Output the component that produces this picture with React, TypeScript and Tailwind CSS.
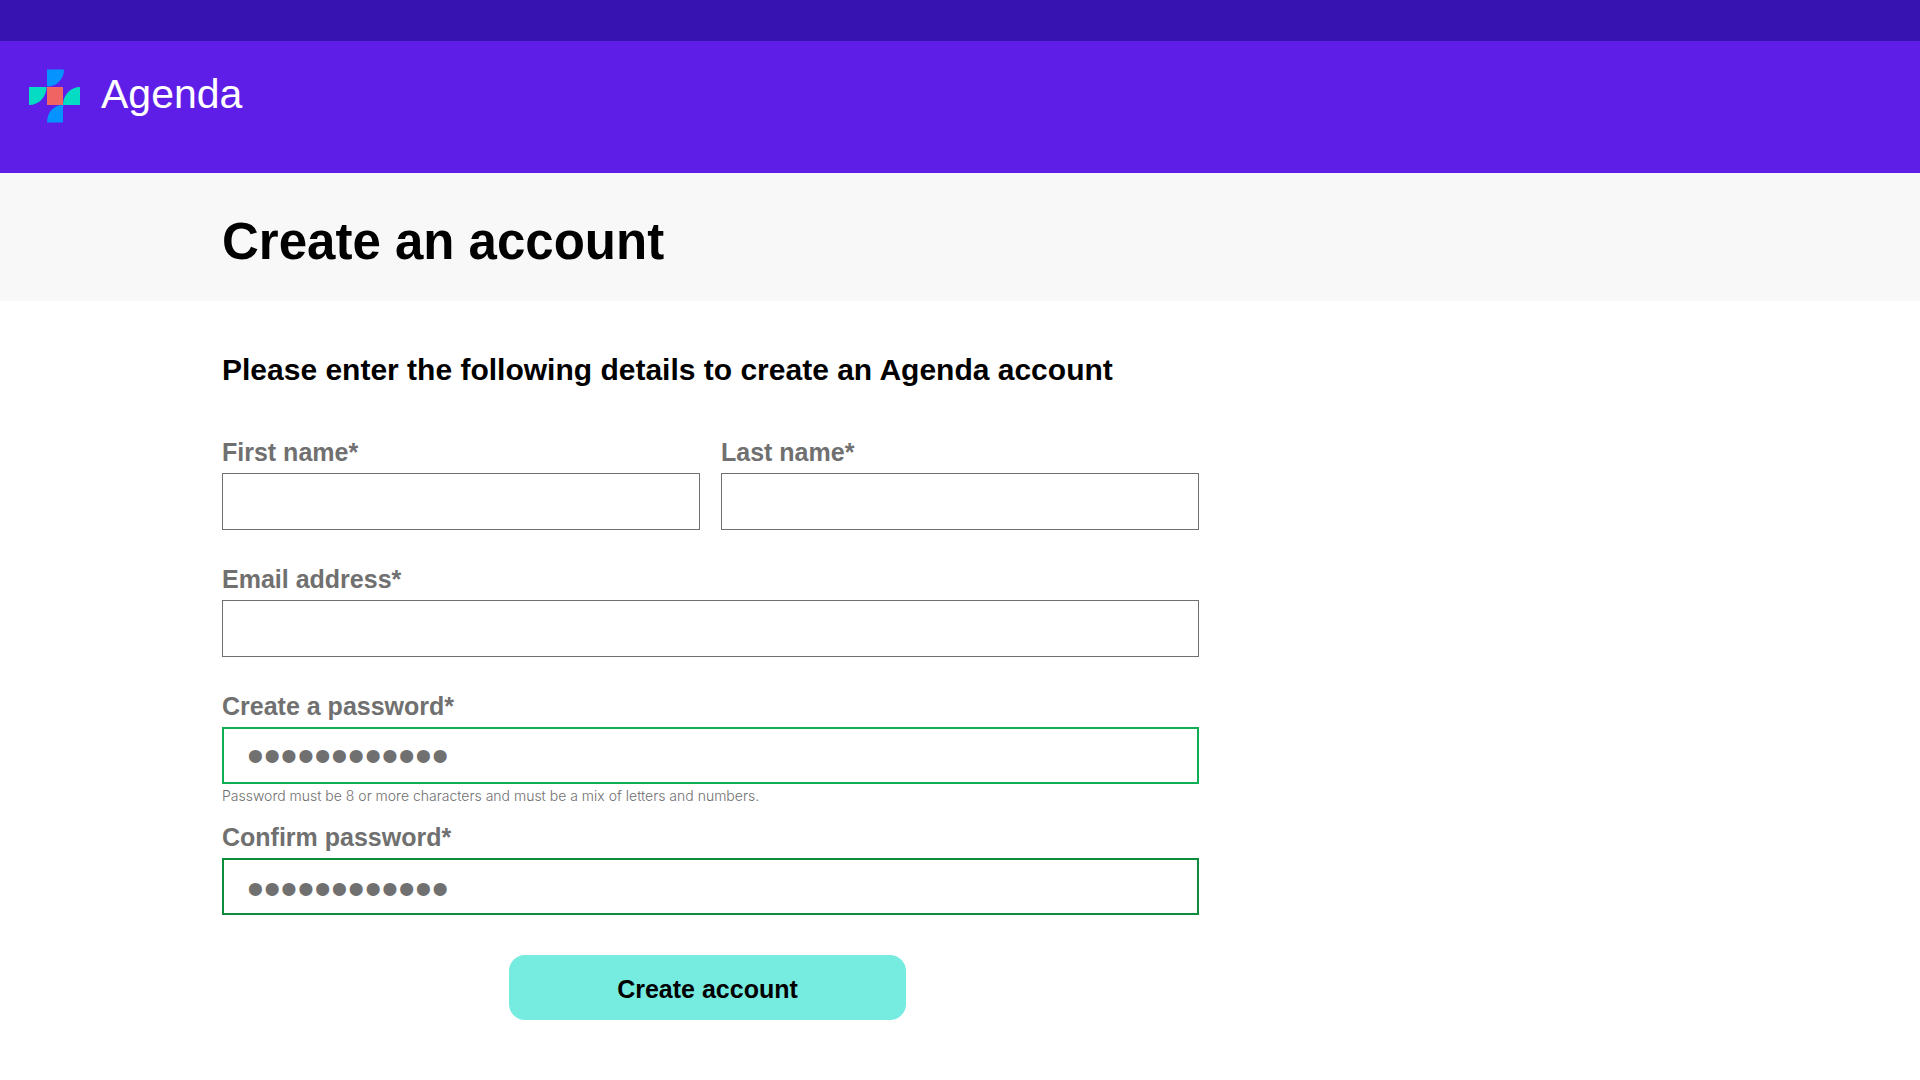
import { useId } from "react";

type FieldProps = {
  label: string;
  type?: string;
  value?: string;
  inputClass?: string;
};

function Field({
  label,
  type = "text",
  value,
  inputClass = "border border-[#707070]",
}: FieldProps) {
  const id = useId();
  return (
    <div className="flex flex-1 flex-col">
      <label htmlFor={id} className="mb-[5px] text-[25px] leading-8 font-bold text-[#707070]">
        {label}
      </label>
      <input
        id={id}
        type={type}
        defaultValue={value}
        className={`h-[57px] w-full bg-white px-[23px] text-[#707070] outline-none ${inputClass}`}
      />
    </div>
  );
}

function Logo() {
  return (
    <svg width="53" height="54" viewBox="0 0 53 54" aria-hidden="true">
      <path d="M19 0.5h17c0 9.5-7 17-17 17z" fill="#0593ff" />
      <path d="M1 18h17.500c0 10-7.500 18-17.500 18z" fill="#04dcc4" />
      <path d="M35 36c0-10 7.500-18 17-18v18z" fill="#04dcc4" />
      <path d="M19 53.500c0-10 6.500-17.500 16-17.500v17.500z" fill="#0593ff" />
      <path d="M19 18h16v18h-16z" fill="#f06464" />
    </svg>
  );
}

export default function App() {
  return (
    <div className="min-h-screen bg-white font-['Liberation_Sans',Arial,sans-serif] text-black">
      <header className="border-t-[41px] border-[#3713b1] bg-[#5f1ee8] px-7 pt-6 pb-[46px]">
        <a href="#" className="flex h-[62px] w-fit items-center gap-5 text-white">
          <Logo />
          <span className="pb-1 text-[41px] leading-[48px]">Agenda</span>
        </a>
      </header>

      <div className="flex h-32 items-center bg-[#f8f8f8] pt-2.5 pl-[222px]">
        <h1 className="text-[51px] leading-[60px] font-bold">Create an account</h1>
      </div>

      <main className="pt-[51px] pl-[222px]">
        <form className="w-full max-w-[977px]">
          <h2 className="mb-12 text-[30px] leading-9 font-bold">
            Please enter the following details to create an Agenda account
          </h2>
          <div className="mb-[33px] flex gap-[21px]">
            <Field label="First name*" />
            <Field label="Last name*" />
          </div>
          <div className="mb-[33px]">
            <Field label="Email address*" type="email" />
          </div>
          <Field
            label="Create a password*"
            type="password"
            value="agenda123456"
            inputClass="border-2 border-[#10ae54] text-[48px]"
          />
          <p className="mt-0.5 mb-[15px] font-[Inter,sans-serif] text-[14px] leading-5 font-light text-[#707070]">
            Password must be 8 or more characters and must be a mix of letters and numbers.
          </p>
          <Field
            label="Confirm password*"
            type="password"
            value="agenda123456"
            inputClass="border-2 border-[#0d8c3c] pt-1 text-[48px]"
          />
          <button
            type="button"
            className="mt-10 ml-[287px] h-[65px] w-[397px] rounded-2xl bg-[#76ebdf] pt-0.5 text-[25px] leading-8 font-bold"
          >
            Create account
          </button>
        </form>
      </main>
    </div>
  );
}
